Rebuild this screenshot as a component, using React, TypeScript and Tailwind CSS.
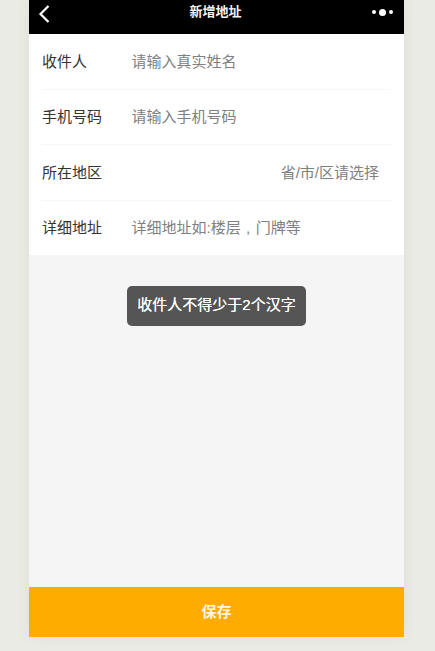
import type { ReactNode } from 'react'

const rows: { label: string; placeholder: ReactNode; right?: boolean; rowClass: string }[] = [
  { label: '收件人', placeholder: '请输入真实姓名', rowClass: 'h-[55.5px] border-b pt-[1px]' },
  { label: '手机号码', placeholder: '请输入手机号码', rowClass: 'h-[55.5px] border-b' },
  { label: '所在地区', placeholder: '省/市/区请选择', right: true, rowClass: 'h-[55.5px] border-b pt-[1px]' },
  {
    label: '详细地址',
    placeholder: (
      <>
        详细地址如:楼层<span className="inline-block w-[15px] text-center">,</span>门牌等
      </>
    ),
    rowClass: 'h-[54.5px]',
  },
]

export default function App() {
  return (
    <div className="h-[651px] overflow-hidden bg-[#ebebe6] font-['Liberation_Sans','Noto_Sans_CJK_SC',sans-serif]">
      <div className="relative mx-auto flex h-[637px] w-[375px] -translate-x-[1px] flex-col bg-[#f5f5f5] shadow-[0_0_14px_rgba(0,0,0,0.06)]">
        <header className="flex h-[34px] items-center bg-black pr-[11px] pl-[9px]">
          <div className="w-[22px]">
            <svg width="12" height="20" viewBox="0 0 12 20" fill="none" className="-mt-[7px]">
              <path d="M10.5 2 2.5 10l8 8" stroke="#fff" strokeWidth="2.2" />
            </svg>
          </div>
          <h1 className="-mt-[10px] flex-1 text-center text-[13px] font-bold text-[#f4f4f4]">新增地址</h1>
          <div className="-mt-[10px] flex w-[22px] items-center justify-end gap-[3px]">
            <span className="size-[4px] rounded-full bg-white" />
            <span className="size-[7px] rounded-full bg-white" />
            <span className="size-[4px] rounded-full bg-white" />
          </div>
        </header>

        <form className="bg-white px-[13px]">
          {rows.map(({ label, placeholder, right, rowClass }) => (
            <div key={label} className={`flex items-center border-[#f7f7f7] text-[15px] ${rowClass}`}>
              <span className="w-[89.5px] shrink-0 text-[#333]">{label}</span>
              <span className={`flex-1 text-[#808080] ${right ? 'pr-[12px] text-right' : ''}`}>{placeholder}</span>
            </div>
          ))}
        </form>

        <div className="absolute top-[285.5px] left-[98px] flex h-[40px] w-[179px] items-center justify-center rounded-[5px] bg-[#555] text-[15px] text-white [text-shadow:0_0_0.3px_#fff]">
          收件人不得少于2个汉字
        </div>

        <button className="mt-auto h-[50px] w-full bg-[#ffab00] text-[15px] font-bold text-[#fff6e0]">保存</button>
      </div>
    </div>
  )
}
